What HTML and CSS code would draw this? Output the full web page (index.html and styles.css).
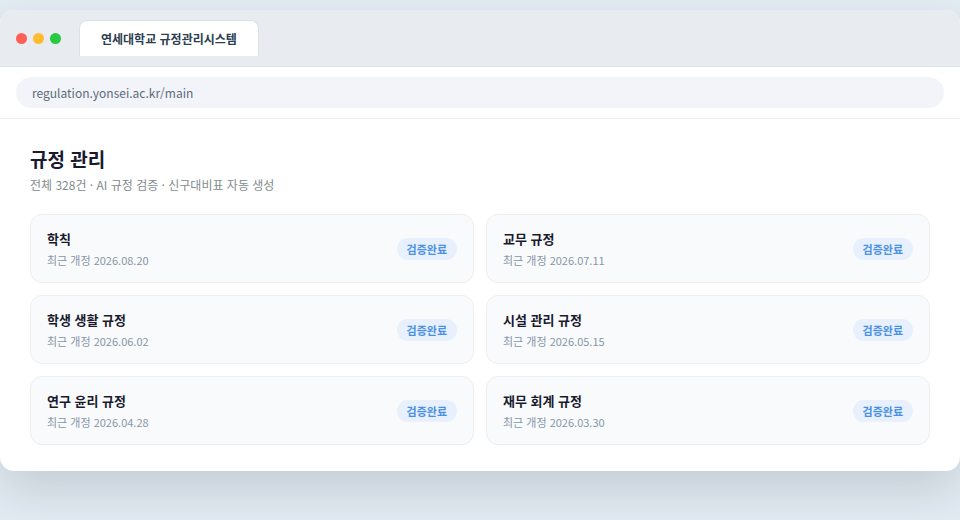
FILE: index.html
```
<!DOCTYPE html>
<html lang="ko">
<head>
    <meta charset="UTF-8">
    <meta name="viewport" content="width=device-width, initial-scale=1.0">
    <title>연세대학교 규정관리시스템</title>
    <link rel="stylesheet" href="styles.css">
</head>
<body>
    <div class="browser">
        <div class="tab-bar">
            <span class="dot red"></span>
            <span class="dot yellow"></span>
            <span class="dot green"></span>
            <div class="tab">연세대학교 규정관리시스템</div>
        </div>
        <div class="address-bar">
            <input type="text" class="url" aria-label="주소" value="regulation.yonsei.ac.kr/main">
        </div>
        <main class="content">
            <h1>규정 관리</h1>
            <p class="summary">전체 328건 · AI 규정 검증 · 신구대비표 자동 생성</p>
            <div class="cards">
                <div class="card">
                    <div>
                        <h2>학칙</h2>
                        <p class="date">최근 개정 2026.08.20</p>
                    </div>
                    <span class="badge">검증완료</span>
                </div>
                <div class="card">
                    <div>
                        <h2>교무 규정</h2>
                        <p class="date">최근 개정 2026.07.11</p>
                    </div>
                    <span class="badge">검증완료</span>
                </div>
                <div class="card">
                    <div>
                        <h2>학생 생활 규정</h2>
                        <p class="date">최근 개정 2026.06.02</p>
                    </div>
                    <span class="badge">검증완료</span>
                </div>
                <div class="card">
                    <div>
                        <h2>시설 관리 규정</h2>
                        <p class="date">최근 개정 2026.05.15</p>
                    </div>
                    <span class="badge">검증완료</span>
                </div>
                <div class="card">
                    <div>
                        <h2>연구 윤리 규정</h2>
                        <p class="date">최근 개정 2026.04.28</p>
                    </div>
                    <span class="badge">검증완료</span>
                </div>
                <div class="card">
                    <div>
                        <h2>재무 회계 규정</h2>
                        <p class="date">최근 개정 2026.03.30</p>
                    </div>
                    <span class="badge">검증완료</span>
                </div>
            </div>
        </main>
    </div>
</body>
</html>
```
FILE: styles.css
```
* {
    box-sizing: border-box;
}
body {
    font-family: "Noto Sans CJK KR", sans-serif;
    margin: 0;
    padding: 10px 0 48px;
    min-height: 100vh;
    background-color: #e4edf4;
}
.browser {
    background-color: #fff;
    border-radius: 14px;
    overflow: hidden;
    box-shadow: 0 20px 50px rgba(26, 26, 46, 0.16);
}
.tab-bar {
    display: flex;
    align-items: center;
    gap: 6px;
    padding: 10px 16px;
    background-color: #e8ebf0;
    border-bottom: 1px solid #dcdfe8;
}
.dot {
    width: 11px;
    height: 11px;
    border-radius: 50%;
}
.red {
    background-color: #ff5f57;
}
.yellow {
    background-color: #febc2e;
}
.green {
    background-color: #28c840;
}
.tab {
    margin-left: 12px;
    padding: 8px 21px;
    background-color: #fff;
    border: 1px solid #dce0e8;
    border-bottom: none;
    border-radius: 8px 8px 0 0;
    font-size: 12px;
    line-height: 19px;
    font-weight: 600;
    color: #2c3e50;
}
.address-bar {
    padding: 10px 16px;
    border-bottom: 1px solid #eceef2;
}
.url {
    display: block;
    width: 100%;
    height: 31px;
    padding: 0 16px;
    border: none;
    border-radius: 16px;
    background-color: #f3f4f9;
    font-family: inherit;
    font-size: 12px;
    color: #5a6b7b;
}
.content {
    padding: 26px 30px;
}
h1 {
    margin: 0 0 3px;
    font-size: 19px;
    line-height: 28px;
    color: #1a1a2e;
}
.summary {
    margin: 0 0 20px;
    font-size: 12px;
    line-height: 18px;
    color: #7f8c8d;
}
.cards {
    display: grid;
    grid-template-columns: 1fr 1fr;
    gap: 12px;
}
.card {
    display: flex;
    justify-content: space-between;
    align-items: center;
    padding: 14px 16px;
    background-color: #f8fafc;
    border: 1px solid #eceef2;
    border-radius: 12px;
}
h2 {
    margin: 0 0 3px;
    font-size: 13px;
    line-height: 20px;
    color: #1a1a2e;
}
.date {
    margin: 0;
    font-size: 11px;
    line-height: 16px;
    color: #8896a5;
}
.badge {
    padding: 3px 10px;
    background-color: #e8f0fe;
    border-radius: 12px;
    font-size: 11px;
    line-height: 16px;
    font-weight: 700;
    color: #4a90e2;
}
```
